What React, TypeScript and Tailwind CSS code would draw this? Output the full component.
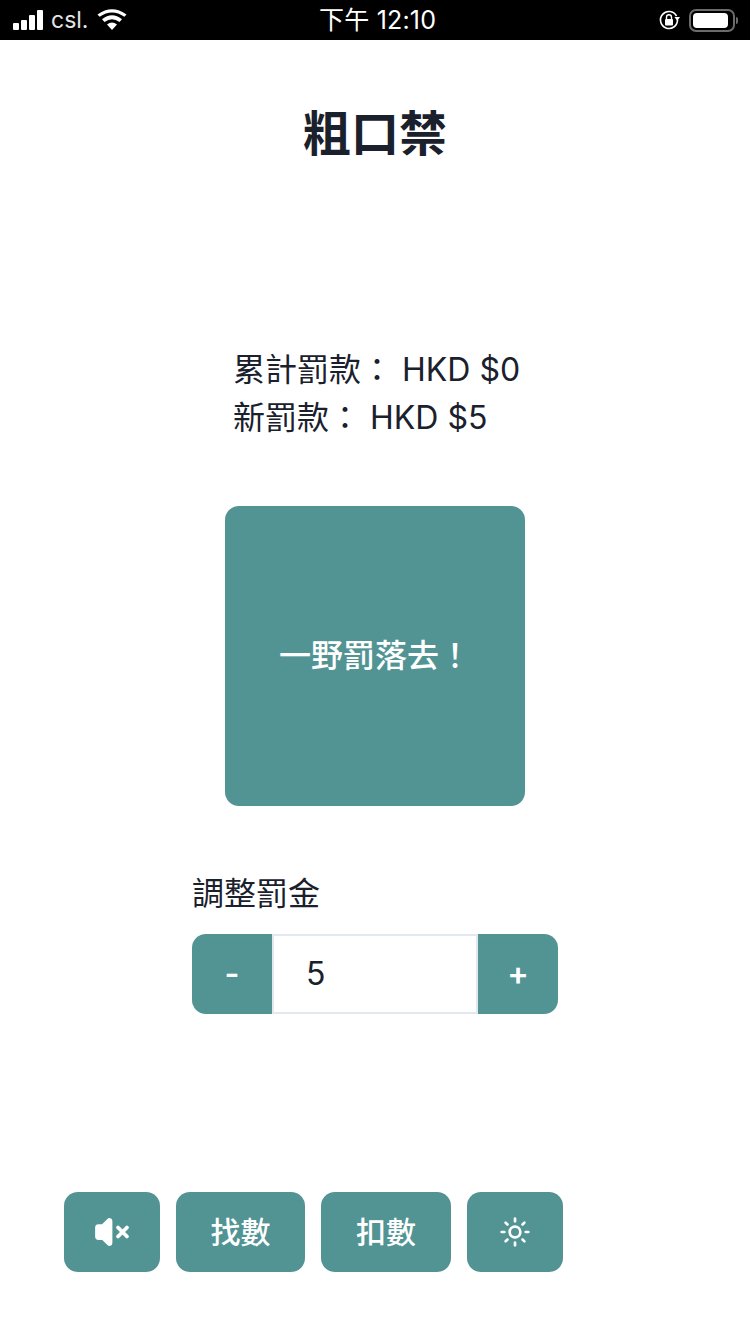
import { Sun, VolumeX } from "lucide-react";
import React from "react";

const font = "font-['Inter','Noto_Sans_CJK_TC',sans-serif]";

function StatusBar(): JSX.Element {
  return (
    <div className="h-10 bg-black text-white flex items-center justify-between relative pl-[13px] pr-[12px]">
      <div className="flex items-center">
        <div className="flex items-end gap-[2px] h-[20px]">
          <div className="w-[6px] h-[7px] rounded-[1px] bg-white" />
          <div className="w-[6px] h-[10px] rounded-[1px] bg-white" />
          <div className="w-[6px] h-[15px] rounded-[1px] bg-white" />
          <div className="w-[6px] h-[20px] rounded-[1px] bg-white" />
        </div>
        <span className="ml-[8px] text-[23px] leading-none text-[#e5e5e5] font-['Inter',sans-serif]">
          csl.
        </span>
        <svg className="ml-[9px]" width="30" height="22" viewBox="0 0 30 22">
          <path d="M15 21 L10 15.5 Q15 11.5 20 15.5 Z" fill="#fff" />
          <path d="M7.5 13 L5 10.2 Q15 2.5 25 10.2 L22.5 13 Q15 7.5 7.5 13 Z" fill="#fff" />
          <path d="M2.6 7.8 L0.5 5.4 Q15 -5 29.5 5.4 L27.4 7.8 Q15 -1 2.6 7.8 Z" fill="#fff" />
        </svg>
      </div>
      <span className="absolute left-[319px] top-[5px] text-[25px] leading-[30px] tracking-[0.2px]">
        下午 12:10
      </span>
      <div className="flex items-center">
        <svg width="22" height="22" viewBox="0 0 22 22" className="mr-[9px]">
          <path d="M18.5 7 A8.5 8.5 0 1 0 19.5 11" fill="none" stroke="#fff" strokeWidth="1.6" />
          <path d="M16.5 8 L22 8 L19.2 12 Z" fill="#fff" />
          <rect x="7" y="10" width="8" height="6.5" rx="1" fill="#fff" />
          <path d="M8.5 10 V8.3 a2.5 2.5 0 0 1 5 0 V10" fill="none" stroke="#fff" strokeWidth="1.4" />
        </svg>
        <div className="w-[46px] h-[23px] rounded-[7px] border-2 border-[#6b6b6b] p-[2px]">
          <div className="w-[35px] h-full rounded-[4px] bg-white" />
        </div>
        <div className="ml-[1px] w-[2px] h-[7px] rounded-r-[2px] bg-[#6b6b6b]" />
      </div>
    </div>
  );
}

function BottomButton({ children, className }: { children: React.ReactNode; className: string }): JSX.Element {
  return (
    <button className={`h-20 rounded-[14px] bg-[#529494] text-white text-[30px] font-medium flex items-center justify-center ${className}`}>
      {children}
    </button>
  );
}

export default function App(): JSX.Element {
  return (
    <div className={`h-[1334px] bg-white flex flex-col text-[#1a202c] ${font}`}>
      <StatusBar />
      <h1 className="mt-[60px] text-center text-[48px] leading-[68px] font-bold">粗口禁</h1>

      <div className="mt-[178px] ml-[233px] text-[32px] leading-[48px]">
        <p>累計罰款： HKD $0</p>
        <p>新罰款： HKD $5</p>
      </div>

      <button className="mt-[64px] mx-auto w-[300px] h-[300px] rounded-[14px] bg-[#529494] text-white text-[32px] font-medium">
        一野罰落去！
      </button>

      <div className="mt-[64px] ml-[192px] w-[366px]">
        <p className="text-[32px] leading-[48px] mb-[16px]">調整罰金</p>
        <div className="flex h-20">
          <button className="w-20 rounded-l-[14px] bg-[#529494] text-white text-[32px] font-semibold">-</button>
          <div className="flex-1 border-2 border-[#e2e8f0] flex items-center pl-[32px] text-[32px]">5</div>
          <button className="w-20 rounded-r-[14px] bg-[#529494] text-white text-[32px] font-semibold">+</button>
        </div>
      </div>

      <div className="mt-[178px] ml-[64px] flex gap-4">
        <BottomButton className="w-24">
          <VolumeX size={36} strokeWidth={2.5} fill="#fff" />
        </BottomButton>
        <BottomButton className="w-[129px]">找數</BottomButton>
        <BottomButton className="w-[130px]">扣數</BottomButton>
        <BottomButton className="w-24">
          <Sun size={32} strokeWidth={2} />
        </BottomButton>
      </div>
    </div>
  );
}
